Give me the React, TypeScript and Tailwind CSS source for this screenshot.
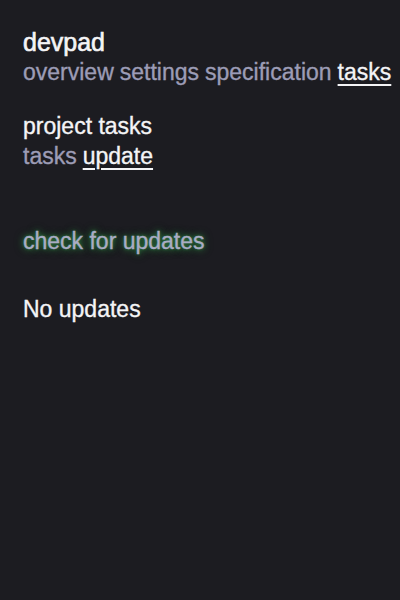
export default function App() {
  return (
    <div className="min-h-[600px] w-full bg-[#1c1c21] px-[23px] pt-[27px] font-['Liberation_Sans',Arial,sans-serif] text-[23px] leading-[30px] text-[#f4f4f6] [-webkit-text-stroke:0.35px_currentColor]">
      <header>
        <h1 className="text-[25px] [-webkit-text-stroke:0.6px_currentColor]">devpad</h1>
        <nav className="flex gap-[6px] text-[#9c9cb6]">
          <a href="#">overview</a>
          <a href="#">settings</a>
          <a href="#">specification</a>
          <a href="#" className="text-[#f4f4f6] underline decoration-[1.5px] underline-offset-4">tasks</a>
        </nav>
      </header>

      <section className="mt-[24px]">
        <h2>project tasks</h2>
        <div className="flex gap-[6px] text-[#9c9cb6]">
          <a href="#">tasks</a>
          <a href="#" className="text-[#f4f4f6] underline decoration-[1.5px] underline-offset-4">update</a>
        </div>
      </section>

      {/* glowing action */}
      <button className="mt-[55px] block text-[#aaacc4] [text-shadow:0_0_3px_#2e7a3e,0_0_6px_#2e7a3e,0_0_10px_#245e31]">
        check for updates
      </button>

      <p className="mt-[38px]">No updates</p>
    </div>
  );
}
